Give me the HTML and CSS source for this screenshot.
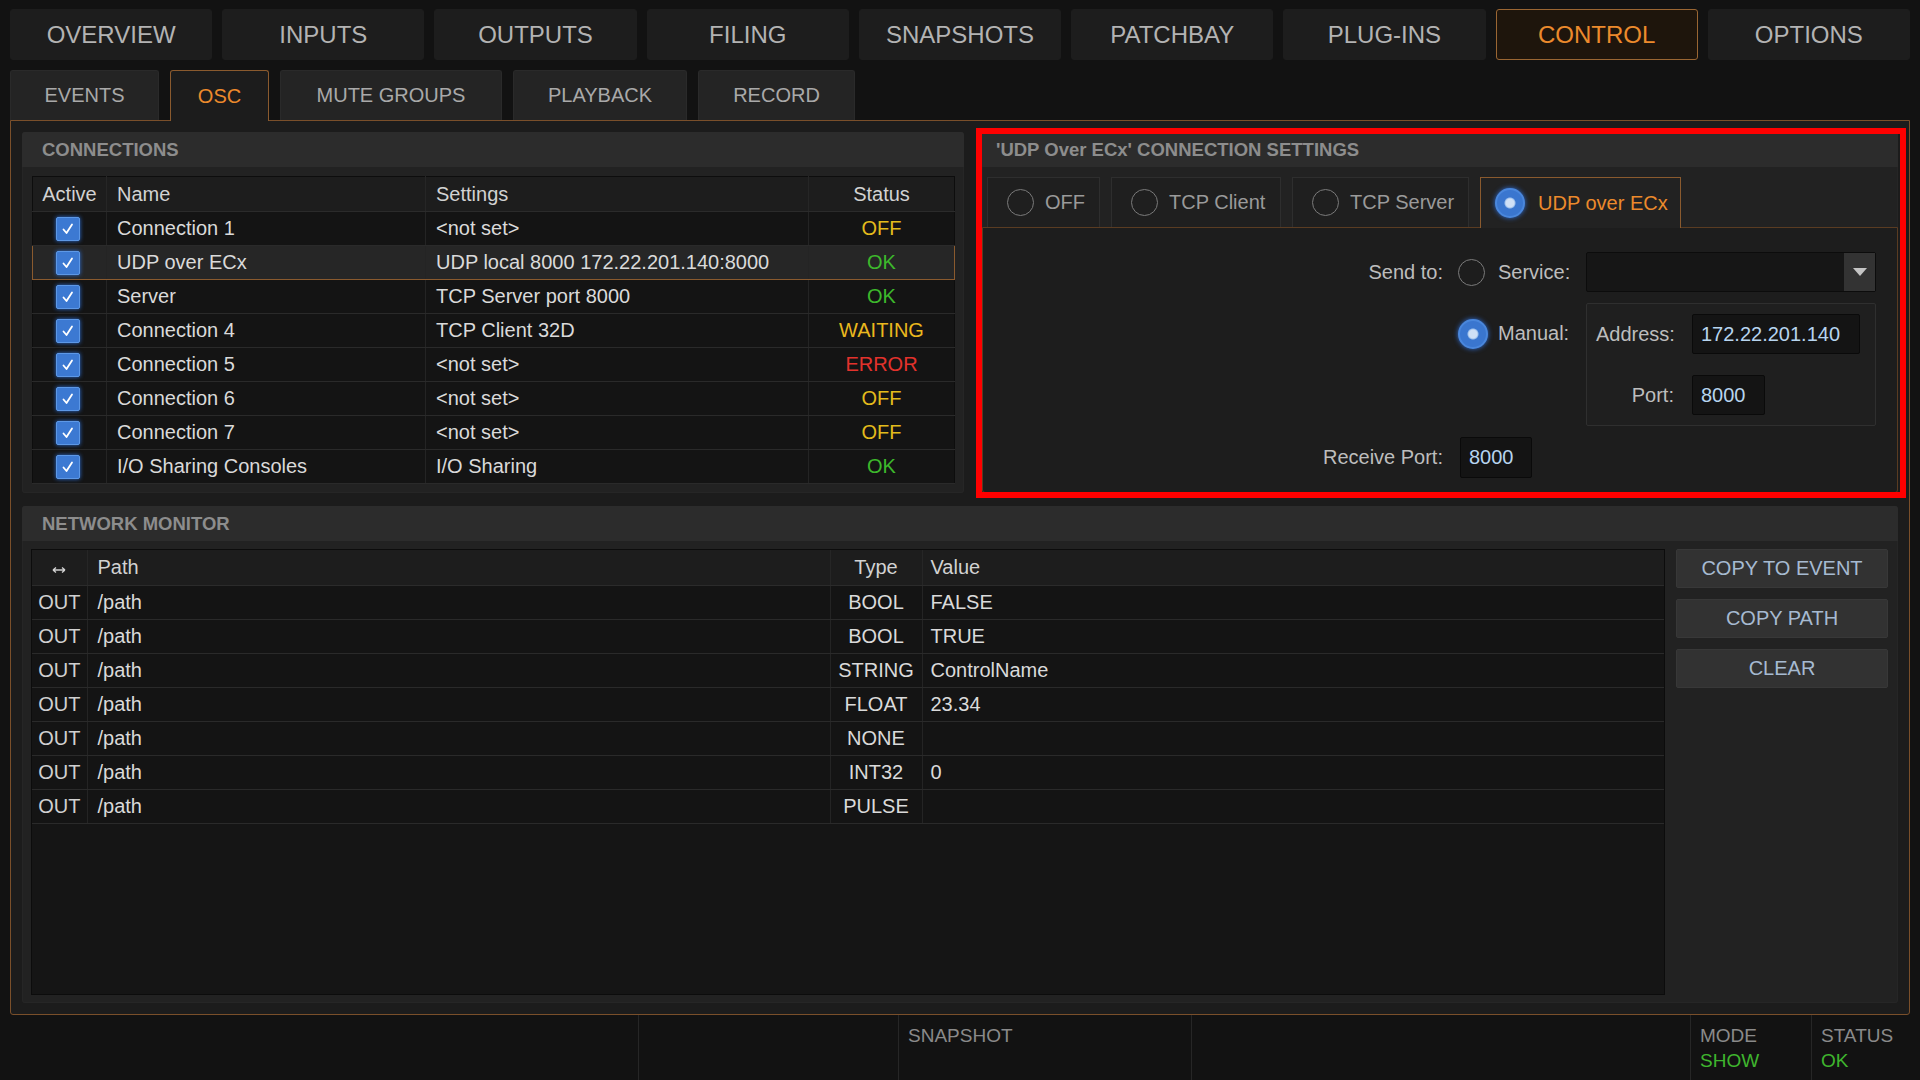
FILE: index.html
```html
<!DOCTYPE html>
<html lang="en">
<head>
  <meta charset="UTF-8">
  <title>Control - OSC</title>
  <link rel="stylesheet" href="styles.css">
</head>
<body>
  <div class="topnav">
    <div class="tab">OVERVIEW</div>
    <div class="tab">INPUTS</div>
    <div class="tab">OUTPUTS</div>
    <div class="tab">FILING</div>
    <div class="tab">SNAPSHOTS</div>
    <div class="tab">PATCHBAY</div>
    <div class="tab">PLUG-INS</div>
    <div class="tab active">CONTROL</div>
    <div class="tab">OPTIONS</div>
  </div>

  <div class="subnav">
    <div class="subtab w-events">EVENTS</div>
    <div class="subtab w-osc active">OSC</div>
    <div class="subtab w-mute">MUTE GROUPS</div>
    <div class="subtab w-play">PLAYBACK</div>
    <div class="subtab w-rec">RECORD</div>
  </div>

  <div class="panel">
    <div class="toprow">
      <section class="section connections">
        <div class="section-head">CONNECTIONS</div>
        <div class="conn-body">
          <table class="grid conn">
            <colgroup>
              <col style="width:74px"><col style="width:319px"><col style="width:383px"><col style="width:146px">
            </colgroup>
            <thead>
              <tr><th class="c">Active</th><th>Name</th><th>Settings</th><th class="c">Status</th></tr>
            </thead>
            <tbody id="conn-rows"></tbody>
          </table>
        </div>
      </section>

      <section class="section settings">
        <div class="section-head">'UDP Over ECx' CONNECTION SETTINGS</div>
        <div class="modes">
          <div class="mode m-off"><span class="radio"></span>OFF</div>
          <div class="mode m-client"><span class="radio"></span>TCP Client</div>
          <div class="mode m-server"><span class="radio"></span>TCP Server</div>
          <div class="mode m-udp active"><span class="radio on"></span>UDP over ECx</div>
        </div>
        <div class="mode-body">
          <div class="form">
            <div class="lbl r1">Send to:</div>
            <div class="rad r1"><span class="radio"></span></div>
            <div class="sub r1">Service:</div>
            <div class="dropdown r1">
              <div class="dd-field"></div>
              <div class="dd-btn">
                <svg width="16" height="10" viewBox="0 0 16 10"><path d="M1 1 L15 1 L8 9 Z" fill="#c4c4c4"/></svg>
              </div>
            </div>

            <div class="rad r2 top"><span class="radio on"></span></div>
            <div class="sub r2 top">Manual:</div>
            <div class="manual r2">
              <div class="mlbl">Address:</div>
              <div class="field addr">172.22.201.140</div>
              <div class="mlbl">Port:</div>
              <div class="field port">8000</div>
            </div>

            <div class="lbl r3">Receive Port:</div>
            <div class="r3 recv"><div class="field port2">8000</div></div>
          </div>
        </div>
        <div class="highlight"></div>
      </section>
    </div>

    <section class="section monitor">
      <div class="section-head">NETWORK MONITOR</div>
      <div class="mon-body">
        <div class="mon-table">
          <table class="grid mon">
            <colgroup>
              <col style="width:55px"><col style="width:743px"><col style="width:92px"><col>
            </colgroup>
            <thead>
              <tr>
                <th class="c">
                  <svg width="14" height="8" viewBox="0 0 14 8"><path d="M1 4 H13 M1 4 L4 1.5 M1 4 L4 6.5 M13 4 L10 1.5 M13 4 L10 6.5" stroke="#d0d0d0" stroke-width="1.4" fill="none"/></svg>
                </th>
                <th>Path</th><th class="c">Type</th><th>Value</th>
              </tr>
            </thead>
            <tbody id="mon-rows"></tbody>
          </table>
        </div>
        <div class="actions">
          <button>COPY TO EVENT</button>
          <button>COPY PATH</button>
          <button>CLEAR</button>
        </div>
      </div>
    </section>
  </div>

  <div class="statusbar">
    <div class="cell s1"></div>
    <div class="cell s2"></div>
    <div class="cell s3">SNAPSHOT</div>
    <div class="cell s4"></div>
    <div class="cell s5">MODE<span class="green">SHOW</span></div>
    <div class="cell s6">STATUS<span class="green">OK</span></div>
  </div>

  <script>
    const connections = [
      ['Connection 1', '<not set>', 'OFF', 'off'],
      ['UDP over ECx', 'UDP local 8000 172.22.201.140:8000', 'OK', 'ok'],
      ['Server', 'TCP Server port 8000', 'OK', 'ok'],
      ['Connection 4', 'TCP Client 32D', 'WAITING', 'wait'],
      ['Connection 5', '<not set>', 'ERROR', 'err'],
      ['Connection 6', '<not set>', 'OFF', 'off'],
      ['Connection 7', '<not set>', 'OFF', 'off'],
      ['I/O Sharing Consoles', 'I/O Sharing', 'OK', 'ok']
    ];
    const check = '<span class="check"><svg width="16" height="16" viewBox="0 0 16 16"><path d="M3.5 8.5 L6.5 12 L12 3.5" stroke="#fff" stroke-width="1.8" fill="none" stroke-linecap="round" stroke-linejoin="round"/></svg></span>';
    const connBody = document.getElementById('conn-rows');
    connections.forEach((c, i) => {
      const tr = document.createElement('tr');
      if (i === 1) tr.className = 'selected';
      tr.innerHTML = `<td class="c box">${check}</td><td></td><td></td><td class="c st ${c[3]}">${c[2]}</td>`;
      tr.children[1].textContent = c[0];
      tr.children[2].textContent = c[1];
      connBody.appendChild(tr);
    });

    const messages = [
      ['BOOL', 'FALSE'], ['BOOL', 'TRUE'], ['STRING', 'ControlName'], ['FLOAT', '23.34'],
      ['NONE', ''], ['INT32', '0'], ['PULSE', '']
    ];
    const monBody = document.getElementById('mon-rows');
    messages.forEach(m => {
      const tr = document.createElement('tr');
      tr.innerHTML = `<td class="c">OUT</td><td>/path</td><td class="c">${m[0]}</td><td>${m[1]}</td>`;
      monBody.appendChild(tr);
    });
  </script>
</body>
</html>
```

FILE: styles.css
```css
body { margin: 0; width: 1920px; height: 1080px; overflow: hidden; background: #121212; font-family: "Liberation Sans", Arial, sans-serif; color: #d6d6d6; }

.topnav { display: flex; gap: 10px; padding: 9px 10px 0; }
.tab { flex: 1; height: 51px; display: flex; align-items: center; justify-content: center; background: #1d1d1d; border: 1px solid #1d1d1d; border-radius: 3px; box-sizing: border-box; font-size: 24px; color: #b3b3b3; }
.tab.active { background: #1e150c; border-color: #9a6633; color: #ec8a2c; }

.subnav { display: flex; gap: 11px; padding: 0 10px; margin-top: 10px; height: 50px; }
.subtab { height: 50px; display: flex; align-items: center; justify-content: center; background: #242424; border: 1px solid #2a2a2a; border-bottom: none; border-radius: 3px 3px 0 0; box-sizing: border-box; font-size: 20px; color: #a9a9a9; }
.subtab.active { height: 51px; background: #1c1c1c; border-color: #8a5a2e; color: #ec8a2c; position: relative; z-index: 1; }
.w-events { width: 149px; }
.w-osc { width: 99px; }
.w-mute { width: 222px; }
.w-play { width: 174px; }
.w-rec { width: 157px; }

.panel { margin: 0 10px; height: 895px; box-sizing: border-box; border: 1px solid #7a4f2a; border-radius: 0 0 3px 3px; background: #1c1c1c; padding: 11px; display: flex; flex-direction: column; gap: 14px; }
.toprow { display: grid; grid-template-columns: 942px 916px; column-gap: 18px; height: 360px; }

.section { background: #222; border-radius: 3px; display: flex; flex-direction: column; box-shadow: inset 0 0 0 1px #262626; }
.section-head { height: 35px; line-height: 36px; background: #2c2c2c; border-radius: 3px 3px 0 0; padding-left: 20px; font-size: 18.5px; font-weight: bold; color: #8d8d8d; }
.settings .section-head { padding-left: 14px; }

.conn-body { padding: 9px 10px; }
.grid { border-collapse: collapse; table-layout: fixed; width: 100%; font-size: 20px; }
.grid th { height: 34px; padding: 0 0 0 10px; text-align: left; font-weight: normal; color: #d2d2d2; background: #1d1d1d; border-left: 1px solid #262626; border-bottom: 1px solid #2b2b2b; }
.grid td { height: 33px; padding: 0 0 0 10px; background: #141414; border-left: 1px solid #242424; border-bottom: 1px solid #2a2a2a; white-space: nowrap; color: #dadada; }
.grid th:first-child, .grid td:first-child { border-left: none; }
.grid .c { text-align: center; padding: 0; }
.grid .box { padding-right: 4px; }
.mon th:nth-child(4), .mon td:nth-child(4) { padding-left: 8px; }
.conn { border: 1px solid #0d0d0d; }
.conn tr.selected td { background: #262626; border-top: 1px solid #8a5a2e; border-bottom: 1px solid #8a5a2e; }
.conn tr.selected td:first-child { border-left: 1px solid #8a5a2e; }
.conn tr.selected td:last-child { border-right: 1px solid #8a5a2e; }
.st.off { color: #e3bb1c; }
.st.ok { color: #3db82c; }
.st.wait { color: #eab81e; }
.st.err { color: #e3322c; }

.check { display: inline-flex; align-items: center; justify-content: center; width: 22px; height: 22px; vertical-align: middle; background: #3c79d2; border: 1px solid #5d98e6; border-radius: 2px; box-shadow: 0 0 4px #2d6fd6; }

.settings { position: relative; }
.modes { display: flex; gap: 11px; padding: 10px 5px 0; position: relative; z-index: 1; }
.mode { height: 50px; box-sizing: border-box; display: flex; align-items: center; gap: 11px; padding-left: 19px; background: #1f1f1f; border: 1px solid #2e2e2e; border-bottom: none; font-size: 20px; color: #9a9a9a; }
.mode.active { height: 51px; background: #222; border-color: #8a5a2e; color: #ec8a2c; }
.m-off { width: 113px; }
.m-client { width: 170px; }
.m-server { width: 177px; }
.m-udp { width: 201px; padding-left: 14px; gap: 13px; }

.radio { display: inline-block; width: 27px; height: 27px; border: 1.5px solid #7a7a7a; border-radius: 50%; box-sizing: border-box; }
.radio.on { width: 30px; height: 30px; border: 2px solid #4a87dc; background: #3a76cf radial-gradient(circle, #cfe0f6 0 4px, #9ec0ec 5px, transparent 6px); box-shadow: 0 0 5px #2f6fd8; }

.mode-body { flex: 1; margin-top: -1px; border: 1px solid #5a3c22; border-radius: 0 0 3px 3px; background: #1d1d1d; }
.form { display: grid; grid-template-columns: 1fr 40px 88px 290px; grid-template-rows: 40px 123px 41px; row-gap: 11px; padding: 24px 21px 0 0; font-size: 20px; color: #bdbdbd; }
.lbl { grid-column: 1; text-align: right; padding-right: 15px; align-self: center; }
.rad { grid-column: 2; display: flex; align-items: center; }
.sub { grid-column: 3; align-self: center; }
.rad.top, .sub.top { align-self: start; margin-top: 16px; }
.sub.top { margin-top: 19px; }
.r1 { grid-row: 1; }
.r2 { grid-row: 2; }
.r3 { grid-row: 3; }
.dropdown { grid-column: 4; display: flex; border: 1px solid #0c0c0c; border-radius: 2px; background: #161616; }
.dd-field { flex: 1; }
.dd-btn { width: 31px; display: flex; align-items: center; justify-content: center; background: #333; }
.manual { grid-column: 4; display: grid; grid-template-columns: 78px auto; grid-auto-rows: 40px; column-gap: 18px; row-gap: 21px; align-content: start; padding: 10px 15px 0 9px; border: 1px solid #2f2f2f; border-radius: 2px; background: #1f1f1f; }
.mlbl { text-align: right; align-self: center; }
.recv { grid-column: 2 / span 3; display: flex; align-items: center; padding-left: 2px; }
.field { height: 40px; box-sizing: border-box; display: flex; align-items: center; padding-left: 8px; background: #141414; border: 1px solid #0a0a0a; border-radius: 2px; color: #b7d4ef; font-size: 20px; }
.addr { width: 168px; }
.port { width: 73px; }
.port2 { width: 72px; height: 41px; }

.highlight { position: absolute; left: -6px; right: -8px; top: -4px; bottom: -5px; border: 6px solid #ff0000; pointer-events: none; z-index: 2; }

.monitor { flex: 1; }
.mon-body { display: flex; gap: 11px; padding: 8px 10px 8px 9px; flex: 1; }
.mon-table { width: 1634px; box-sizing: border-box; border: 1px solid #0c0c0c; background: #151515; }
.mon th { height: 35px; }
.mon td { height: 33px; }
.mon td:first-child { color: #d0d0d0; }
.actions { flex: 1; display: flex; flex-direction: column; gap: 11px; }
.actions button { height: 39px; background: #323232; border: 1px solid #383838; border-radius: 2px; font-family: inherit; font-size: 20px; color: #a6bad1; }

.statusbar { display: flex; height: 65px; }
.cell { box-sizing: border-box; padding: 10px 9px 0; border-left: 1px solid #262626; font-size: 19px; color: #8a8a8a; display: flex; flex-direction: column; gap: 3px; }
.cell .green { color: #3fb52e; }
.s1 { width: 638px; border-left: none; }
.s2 { width: 260px; }
.s3 { width: 293px; }
.s4 { width: 499px; }
.s5 { width: 121px; }
.s6 { width: 109px; }
```
